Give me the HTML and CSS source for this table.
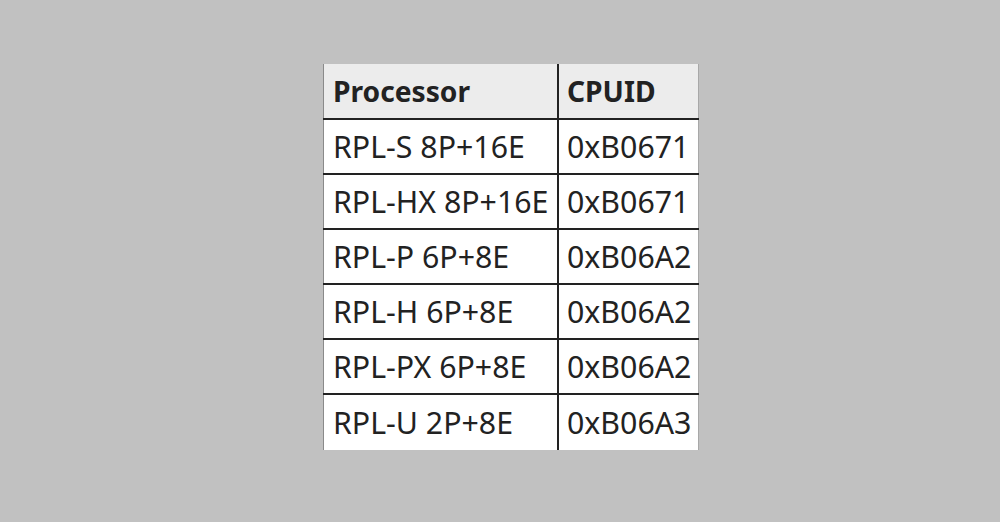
FILE: index.html
```html
<!DOCTYPE html>
<html>
<head>
<meta charset="utf-8">
<link rel="stylesheet" href="styles.css">
</head>
<body>
<div class="stage">
  <table class="cpu">
    <thead>
      <tr><th class="c1">Processor</th><th class="c2">CPUID</th></tr>
    </thead>
    <tbody>
      <tr><td class="c1">RPL-S 8P+16E</td><td class="c2">0xB0671</td></tr>
      <tr><td class="c1">RPL-HX 8P+16E</td><td class="c2">0xB0671</td></tr>
      <tr><td class="c1">RPL-P 6P+8E</td><td class="c2">0xB06A2</td></tr>
      <tr><td class="c1">RPL-H 6P+8E</td><td class="c2">0xB06A2</td></tr>
      <tr><td class="c1">RPL-PX 6P+8E</td><td class="c2">0xB06A2</td></tr>
      <tr><td class="c1">RPL-U 2P+8E</td><td class="c2">0xB06A3</td></tr>
    </tbody>
  </table>
</div>
</body>
</html>
```
FILE: styles.css
```css
html, body {
  margin: 0;
  padding: 0;
  background: #c1c1c1;
}
.stage {
  width: 1000px;
  height: 522px;
  display: flex;
  justify-content: center;
  padding-top: 64px;
  box-sizing: border-box;
  padding-left: 22px;
}
.cpu {
  border-collapse: collapse;
  font-family: "Noto Sans", sans-serif;
  font-size: 30.3px;
  color: #222;
  background: #fff;
  align-self: flex-start;
  border-left: 1px solid #8a8a8a;
  border-right: 1px solid #a8a8a8;
}
.cpu th, .cpu td {
  height: 53px;
  padding: 0 0 0 9px;
  text-align: left;
  white-space: nowrap;
  border-bottom: 2px solid #222;
}
.cpu tbody tr:last-child td {
  border-bottom: none;
  height: 55px;
}
.cpu th {
  background: #ececec;
  font-weight: bold;
  font-size: 28.2px;
  height: 54px;
}
.cpu .c1 {
  width: 224px;
  border-right: 2px solid #222;
}
.cpu .c2 {
  width: 131px;
  padding-left: 8px;
}
```
